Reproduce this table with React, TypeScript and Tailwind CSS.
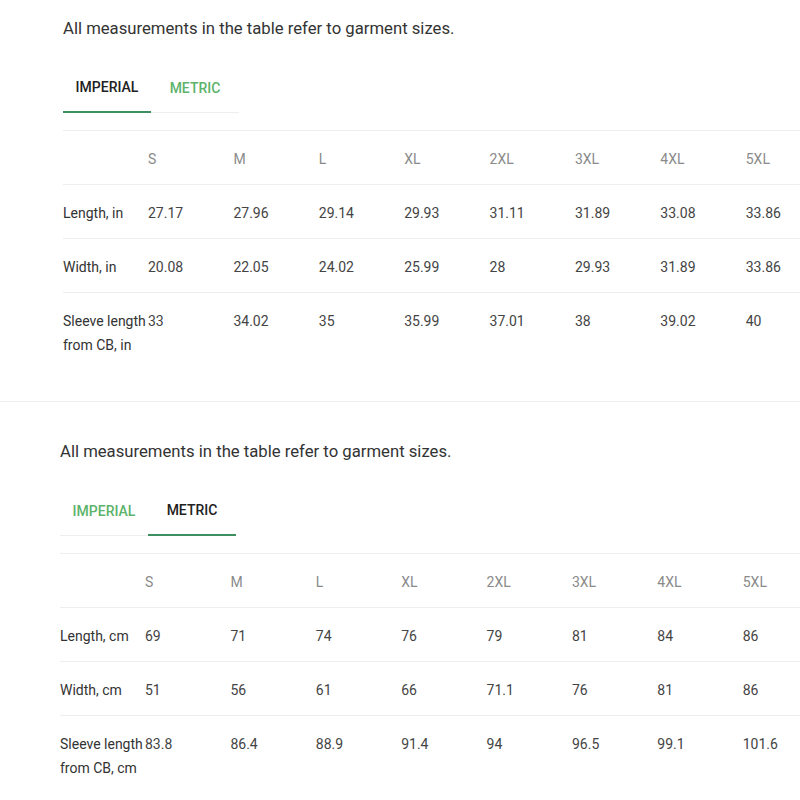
const sizes = ['S', 'M', 'L', 'XL', '2XL', '3XL', '4XL', '5XL'];

interface Row {
  label: string[];
  values: string[];
}

const imperialRows: Row[] = [
  { label: ['Length, in'], values: ['27.17', '27.96', '29.14', '29.93', '31.11', '31.89', '33.08', '33.86'] },
  { label: ['Width, in'], values: ['20.08', '22.05', '24.02', '25.99', '28', '29.93', '31.89', '33.86'] },
  { label: ['Sleeve length', 'from CB, in'], values: ['33', '34.02', '35', '35.99', '37.01', '38', '39.02', '40'] },
];

const metricRows: Row[] = [
  { label: ['Length, cm'], values: ['69', '71', '74', '76', '79', '81', '84', '86'] },
  { label: ['Width, cm'], values: ['51', '56', '61', '66', '71.1', '76', '81', '86'] },
  { label: ['Sleeve length', 'from CB, cm'], values: ['83.8', '86.4', '88.9', '91.4', '94', '96.5', '99.1', '101.6'] },
];

const gridCols = 'grid grid-cols-[85px_repeat(8,85.4px)]';

function Tabs({ active }: { active: 'imperial' | 'metric' }) {
  const tab = (name: string, on: boolean) => (
    <div
      className={
        'flex h-[50px] w-[88px] items-center justify-center text-[14px] font-medium ' +
        (on ? 'border-b-2 border-[#3d8f5f] text-[#222]' : 'border-b border-[#eeeeee] pt-px text-[#5cb36a]')
      }
    >
      {name}
    </div>
  );
  return (
    <div className="mt-[22px] flex items-end">
      {tab('IMPERIAL', active === 'imperial')}
      {tab('METRIC', active === 'metric')}
    </div>
  );
}

function SizeTable({ rows }: { rows: Row[] }) {
  return (
    <div className="mt-[17px] w-[770px] text-[14px] leading-6">
      <div className={gridCols + ' border-t border-[#eeeeee] pt-[16px] pb-[13px] text-[#8a8a8a]'}>
        <div />
        {sizes.map((s) => (
          <div key={s}>{s}</div>
        ))}
      </div>
      {rows.map((r) => (
        <div key={r.label[0]} className={gridCols + ' border-t border-[#eeeeee] pt-[16px] pb-[13px]'}>
          <div className="text-[#333]">
            {r.label.map((l) => (
              <div key={l} className="whitespace-nowrap">{l}</div>
            ))}
          </div>
          {r.values.map((v, i) => (
            <div key={i} className="text-[#444]">
              {v}
            </div>
          ))}
        </div>
      ))}
    </div>
  );
}

function Section({ active, rows, className }: { active: 'imperial' | 'metric'; rows: Row[]; className: string }) {
  return (
    <div className={className}>
      <p className="text-[16.7px] leading-6 text-[#333]">All measurements in the table refer to garment sizes.</p>
      <Tabs active={active} />
      <SizeTable rows={rows} />
    </div>
  );
}

export default function App() {
  return (
    <div className="h-[800px] w-[800px] overflow-hidden bg-white font-['Roboto',sans-serif]">
      <Section active="imperial" rows={imperialRows} className="pl-[63px] pt-[17px] pb-[31px]" />
      <div className="border-t border-[#efefef]" />
      <Section active="metric" rows={metricRows} className="pl-[60px] pt-[38px]" />
    </div>
  );
}
